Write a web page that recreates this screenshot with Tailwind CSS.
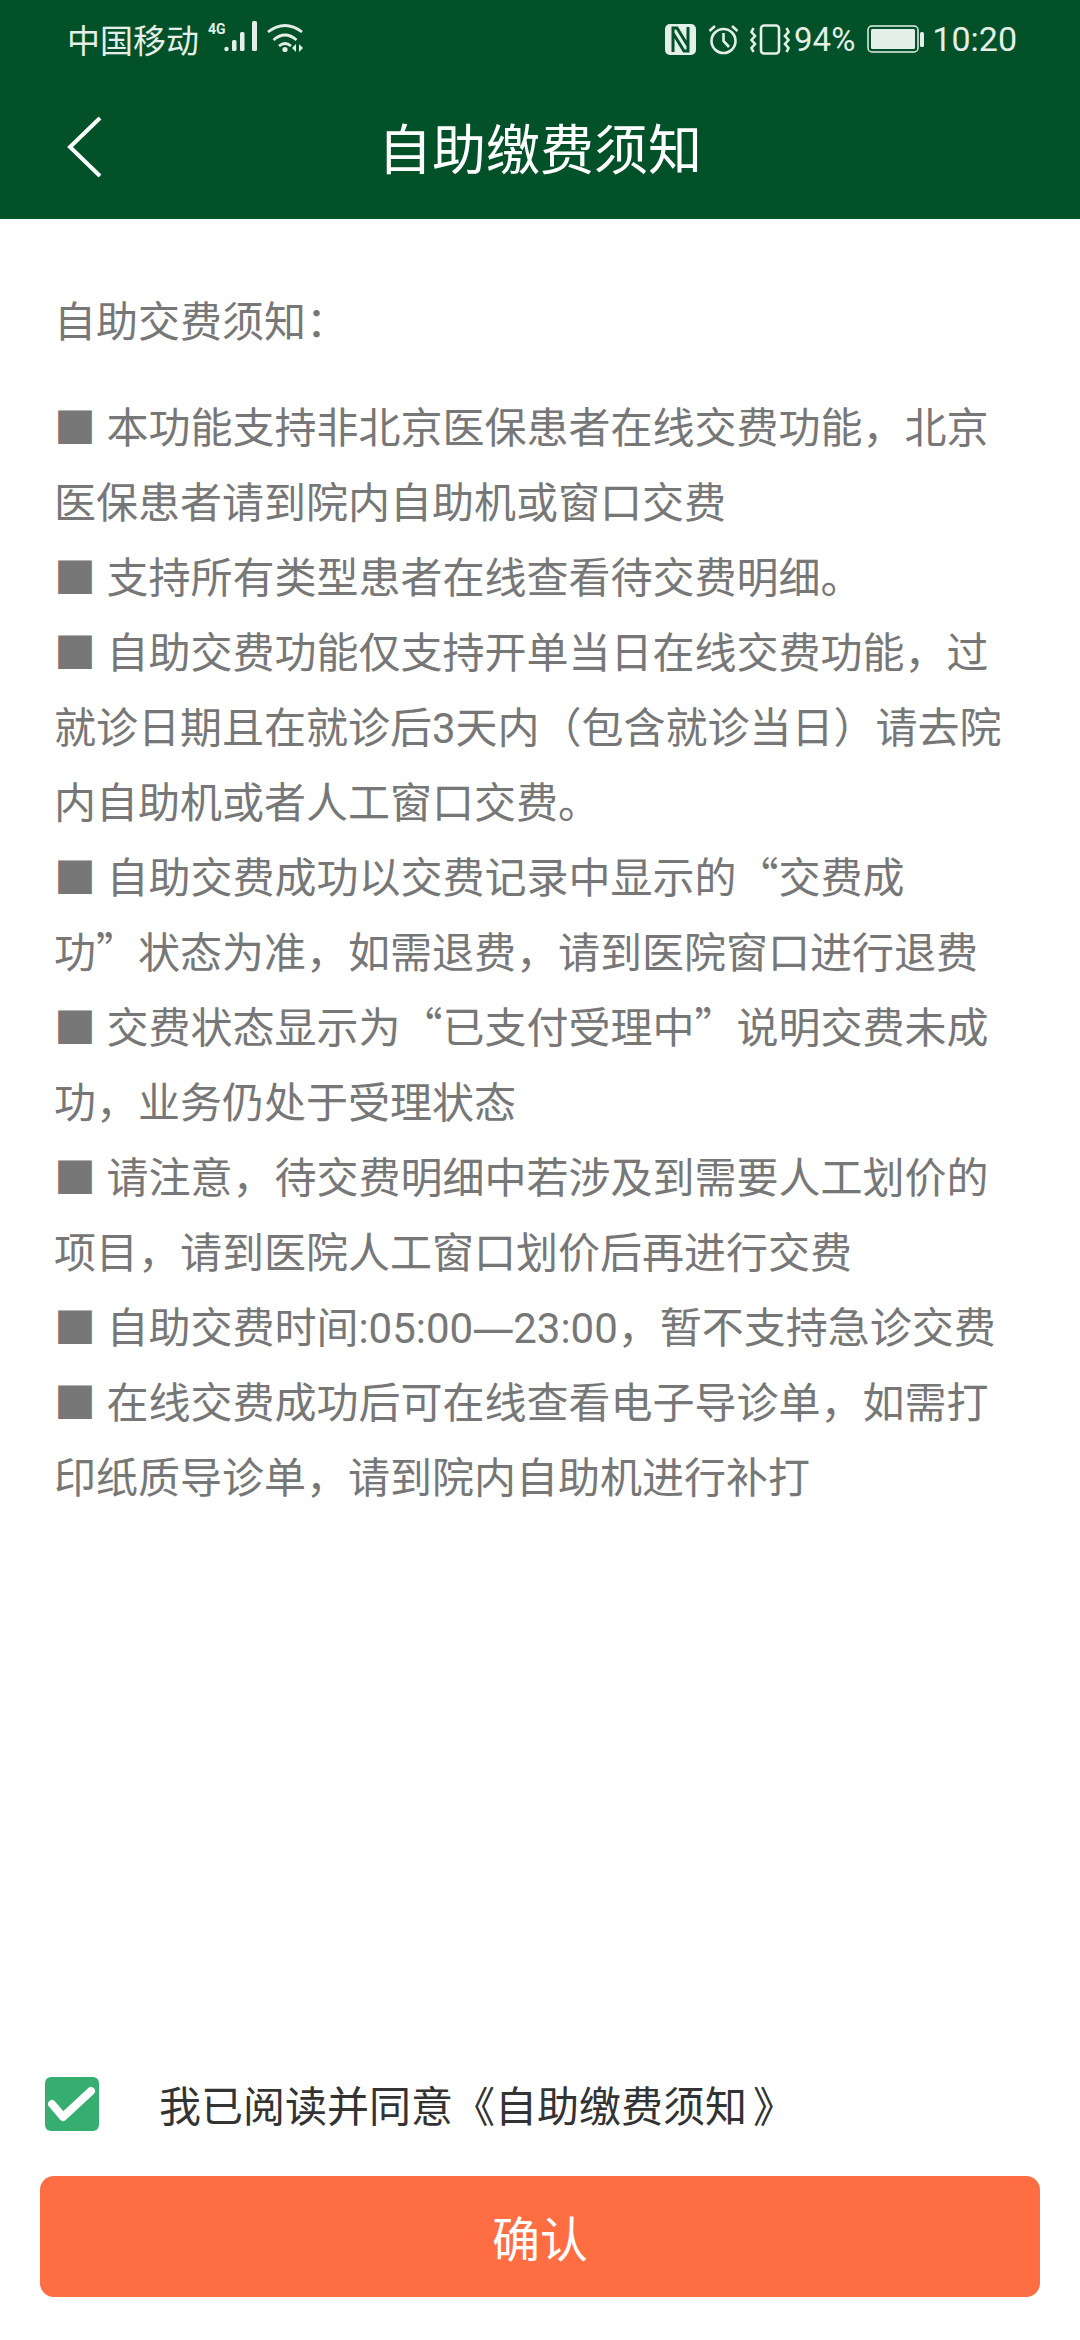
<!DOCTYPE html>
<html lang="zh">
<head>
    <meta charset="UTF-8">
    <meta name="viewport" content="width=device-width, initial-scale=1.0">
    <title>自助缴费须知</title>
    <script src="https://cdn.jsdelivr.net/npm/@tailwindcss/browser@4"></script>
</head>
<body class="bg-white font-['Roboto','Noto_Sans_CJK_SC',sans-serif] [text-spacing-trim:space-all]">
    <div class="w-[1080px] h-[2340px] flex flex-col overflow-hidden">
        <!-- status bar + title -->
        <div class="bg-[#025128] h-[219px] shrink-0 flex flex-col">
            <div class="h-[78px] pl-[67px] pr-[63px] flex items-center justify-between text-[#e3efe8]">
                <div class="flex items-center">
                    <span class="text-[33px] leading-none font-['Noto_Sans_CJK_SC',sans-serif]">中国移动</span>
                    <svg class="ml-[6px] mt-[-4px]" width="54" height="34" viewBox="0 0 54 34" fill="currentColor">
                        <text x="3" y="14" font-size="14" font-weight="700" font-family="Roboto, sans-serif">4G</text>
                        <circle cx="21.5" cy="29" r="2.2"/>
                        <rect x="27" y="20" width="4.5" height="11" rx="1.5"/>
                        <rect x="35" y="12" width="4.5" height="19" rx="1.5"/>
                        <rect x="47" y="1" width="5" height="30" rx="1.5"/>
                    </svg>
                    <svg class="ml-[8px] mt-[-2px]" width="36" height="30" viewBox="0 0 36 30" fill="none" stroke="currentColor" stroke-width="2.8">
                        <path d="M1 9 Q18 -4 35 9"/>
                        <path d="M6.5 17 Q18 7 29.5 17"/>
                        <path d="M12 23 Q18 18 24 23"/>
                        <circle cx="18" cy="26.5" r="2.6" fill="currentColor" stroke="none"/>
                        <path d="M25 25 L29 21 V29 Z M36 25 L32 21 V29 Z" fill="currentColor" stroke="none"/>
                    </svg>
                </div>
                <div class="flex items-center">
                    <svg width="31" height="31" viewBox="0 0 31 31">
                        <rect width="31" height="31" rx="5" fill="#e3efe8"/>
                        <path d="M8 28 V4 H12 L23 22 M23 3 V27 H19 L8 9" fill="none" stroke="#025128" stroke-width="3"/>
                    </svg>
                    <svg class="ml-[12px]" width="31" height="31" viewBox="0 0 31 31" fill="none" stroke="currentColor" stroke-width="2.6">
                        <circle cx="15.5" cy="17" r="12"/>
                        <path d="M15.5 9 V17 L21 23"/>
                        <path d="M1.5 7 L7 2 M29.5 7 L24 2"/>
                    </svg>
                    <svg class="ml-[11px]" width="40" height="31" viewBox="0 0 40 31" fill="none" stroke="currentColor" stroke-width="2.6">
                        <rect x="11" y="1.5" width="18" height="28" rx="3"/>
                        <path d="M3.5 4 L1.5 8 L5 12 L1.5 16 L5 20 L1.5 24 L3.5 28"/>
                        <path d="M36.5 4 L38.5 8 L35 12 L38.5 16 L35 20 L38.5 24 L36.5 28"/>
                    </svg>
                    <span class="ml-[4px] text-[33px] leading-none">94%</span>
                    <svg class="ml-[12px]" width="58" height="28" viewBox="0 0 58 28" fill="currentColor">
                        <rect x="1" y="1" width="50" height="26" rx="4" fill="none" stroke="currentColor" stroke-width="1.5"/>
                        <rect x="4" y="4" width="44" height="20" rx="1.5"/>
                        <rect x="53" y="7" width="4" height="15" rx="1.5"/>
                    </svg>
                    <span class="ml-[7px] text-[34px] leading-none">10:20</span>
                </div>
            </div>
            <div class="relative flex-1 flex items-center justify-center pb-[4px]">
                <svg class="absolute left-[65px] top-[38px]" width="38" height="62" viewBox="0 0 38 62" fill="none" stroke="#fff" stroke-width="4">
                    <path d="M35 2 L5 31 L35 60"/>
                </svg>
                <h1 class="text-white text-[54px] leading-none font-['Noto_Sans_CJK_SC',sans-serif]">自助缴费须知</h1>
            </div>
        </div>

        <!-- notice -->
        <div class="flex-1 pt-[66px] px-[54px] text-[42px] leading-[75px] text-[#777777]">
            <p class="mb-[31px]">自助交费须知：</p>
            <p>
                ■ 本功能支持非北京医保患者在线交费功能，北京<br>
                医保患者请到院内自助机或窗口交费<br>
                ■ 支持所有类型患者在线查看待交费明细。<br>
                ■ 自助交费功能仅支持开单当日在线交费功能，过<br>
                就诊日期且在就诊后3天内（包含就诊当日）请去院<br>
                内自助机或者人工窗口交费。<br>
                ■ 自助交费成功以交费记录中显示的<span class="leading-none font-['Noto_Sans_CJK_SC',sans-serif]">“</span>交费成<br>
                功<span class="leading-none font-['Noto_Sans_CJK_SC',sans-serif]">”</span>状态为准，如需退费，请到医院窗口进行退费<br>
                ■ 交费状态显示为<span class="leading-none font-['Noto_Sans_CJK_SC',sans-serif]">“</span>已支付受理中<span class="leading-none font-['Noto_Sans_CJK_SC',sans-serif]">”</span>说明交费未成<br>
                功，业务仍处于受理状态<br>
                ■ 请注意，待交费明细中若涉及到需要人工划价的<br>
                项目，请到医院人工窗口划价后再进行交费<br>
                ■ 自助交费时间:05:00<span class="mx-[-1px] leading-none font-['Noto_Sans',sans-serif]">—</span>23:00，暂不支持急诊交费<br>
                ■ 在线交费成功后可在线查看电子导诊单，如需打<br>
                印纸质导诊单，请到院内自助机进行补打
            </p>
        </div>

        <!-- agree -->
        <div class="pl-[45px] flex items-center h-[54px] shrink-0">
            <div class="w-[54px] h-[54px] rounded-[6px] bg-[#35ae70] flex items-center justify-center">
                <svg width="54" height="54" viewBox="0 0 54 54" fill="none" stroke="#fff" stroke-width="8" stroke-linecap="round" stroke-linejoin="round">
                    <path d="M7 27 L18 40 L46 14"/>
                </svg>
            </div>
            <span class="ml-[60px] text-[42px] leading-none text-[#333333] font-['Noto_Sans_CJK_SC',sans-serif]">我已阅读并同意《自助缴费须知<span class="ml-[6px]">》</span></span>
        </div>
        <div class="px-[40px] pt-[45px] pb-[43px] shrink-0">
            <button class="w-full h-[121px] pb-[2px] bg-[#ff6e42] rounded-[14px] text-white text-[48px] font-['Noto_Sans_CJK_SC',sans-serif]">确认</button>
        </div>
    </div>
</body>
</html>
